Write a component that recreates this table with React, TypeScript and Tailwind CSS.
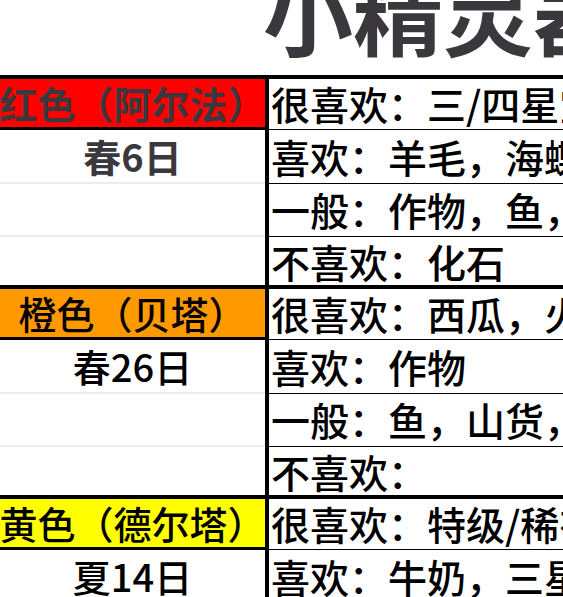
import React from 'react'

type Group = {
  name: string
  headBg: string
  labelClass: string
  date: string
  prefs: string[]
}

const groups: Group[] = [
  {
    name: '红色（阿尔法）',
    headBg: 'bg-[#ff0000]',
    labelClass: 'text-[#3b383d] font-semibold',
    date: '春6日',
    prefs: ['很喜欢：三/四星宝石，金块', '喜欢：羊毛，海蝶，蜂蜜', '一般：作物，鱼，山货', '不喜欢：化石'],
  },
  {
    name: '橙色（贝塔）',
    headBg: 'bg-[#ff9900]',
    labelClass: 'text-black font-medium',
    date: '春26日',
    prefs: ['很喜欢：西瓜，火焰草', '喜欢：作物', '一般：鱼，山货，花', '不喜欢：'],
  },
  {
    name: '黄色（德尔塔）',
    headBg: 'bg-[#ffff00]',
    labelClass: 'text-black font-medium',
    date: '夏14日',
    prefs: ['很喜欢：特级/稀有矿石', '喜欢：牛奶，三星鸡蛋', '一般：作物，山货', '不喜欢：鱼'],
  },
]

// ── Divider between left and right column ─────────────────────────────────
function Line({ h, left, right }: { h: string; left: string; right: string }) {
  return (
    <div className={`flex ${h}`}>
      <div className={`w-[265px] shrink-0 ${left}`} />
      <div className="w-[4px] shrink-0 bg-black" />
      <div className={`flex-1 ${right}`} />
    </div>
  )
}

function Row({
  h,
  leftClass,
  label,
  text,
}: {
  h: string
  leftClass: string
  label?: string
  text: string
}) {
  return (
    <div className={`flex ${h}`}>
      <div
        className={`w-[265px] shrink-0 flex items-center justify-center whitespace-nowrap overflow-visible text-[38px] ${leftClass}`}
      >
        {label}
      </div>
      <div className="w-[4px] shrink-0 bg-black" />
      <div className="flex-1 flex items-center pl-[2px] whitespace-nowrap bg-white text-black text-[39px] font-medium">
        {text}
      </div>
    </div>
  )
}

export default function App() {
  return (
    <div className="w-[563px] h-[597px] overflow-hidden bg-white font-['Noto_Sans_CJK_SC',sans-serif]">
      {/* Title */}
      <div className="h-[75px] overflow-hidden">
        <h1 className="-mt-[35px] pl-[263px] whitespace-nowrap text-[90px] leading-[90px] font-bold text-[#3b383d]">
          小精灵器好表
        </h1>
      </div>

      {/* Table */}
      <div className="w-[900px] leading-none">
        <div className="h-[4px] bg-black" />
        {groups.map((g) => (
          <div key={g.name}>
            <Row h="h-[48px]" leftClass={`${g.headBg} ${g.labelClass}`} label={g.name} text={g.prefs[0]} />
            <Line h="h-[3px]" left="bg-black" right="bg-white border-b border-black" />
            <Row h="h-[52px]" leftClass={`bg-white ${g.labelClass}`} label={g.date} text={g.prefs[1]} />
            <Line h="h-[2px]" left="bg-[#ececec]" right="bg-white border-b border-black" />
            <Row h="h-[51px]" leftClass="bg-white" text={g.prefs[2]} />
            <Line h="h-[2px]" left="bg-[#ececec]" right="bg-white border-b border-black" />
            <Row h="h-[48px]" leftClass="bg-white" text={g.prefs[3]} />
            <div className="h-[4px] bg-black" />
          </div>
        ))}
      </div>
    </div>
  )
}
